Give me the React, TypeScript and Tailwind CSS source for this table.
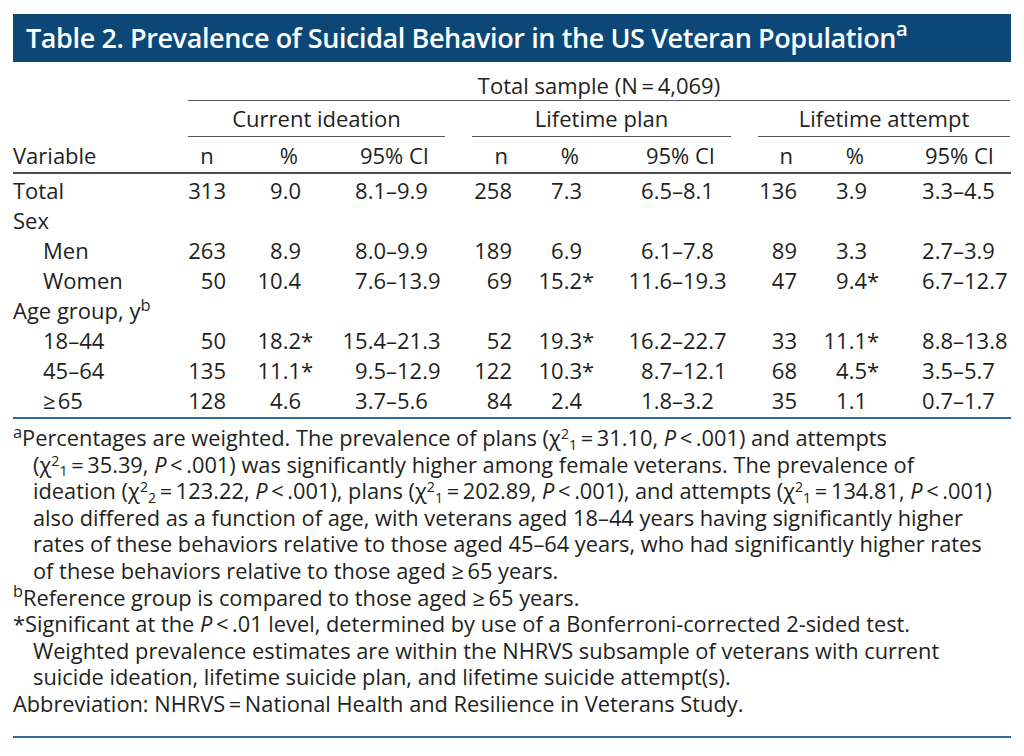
import React from 'react';

const cols =
  'grid grid-cols-[175px_38px_75px_85px_59px_67px_70px_90px_59px_66px_70px_86px_57px]';

type Group = { n: string; pct: string; star?: boolean; lo: string; hi: string };
type Row = { label: React.ReactNode; indent?: boolean; groups?: Group[] };

const T = '\u2009';

const rows: Row[] = [
  {
    label: 'Total',
    groups: [
      { n: '313', pct: '9.0', lo: '8.1', hi: '9.9' },
      { n: '258', pct: '7.3', lo: '6.5', hi: '8.1' },
      { n: '136', pct: '3.9', lo: '3.3', hi: '4.5' },
    ],
  },
  { label: 'Sex' },
  {
    label: 'Men',
    indent: true,
    groups: [
      { n: '263', pct: '8.9', lo: '8.0', hi: '9.9' },
      { n: '189', pct: '6.9', lo: '6.1', hi: '7.8' },
      { n: '89', pct: '3.3', lo: '2.7', hi: '3.9' },
    ],
  },
  {
    label: 'Women',
    indent: true,
    groups: [
      { n: '50', pct: '10.4', lo: '7.6', hi: '13.9' },
      { n: '69', pct: '15.2', star: true, lo: '11.6', hi: '19.3' },
      { n: '47', pct: '9.4', star: true, lo: '6.7', hi: '12.7' },
    ],
  },
  {
    label: (
      <>
        Age group, y<sup>b</sup>
      </>
    ),
  },
  {
    label: '18–44',
    indent: true,
    groups: [
      { n: '50', pct: '18.2', star: true, lo: '15.4', hi: '21.3' },
      { n: '52', pct: '19.3', star: true, lo: '16.2', hi: '22.7' },
      { n: '33', pct: '11.1', star: true, lo: '8.8', hi: '13.8' },
    ],
  },
  {
    label: '45–64',
    indent: true,
    groups: [
      { n: '135', pct: '11.1', star: true, lo: '9.5', hi: '12.9' },
      { n: '122', pct: '10.3', star: true, lo: '8.7', hi: '12.1' },
      { n: '68', pct: '4.5', star: true, lo: '3.5', hi: '5.7' },
    ],
  },
  {
    label: '≥\u200a65',
    indent: true,
    groups: [
      { n: '128', pct: '4.6', lo: '3.7', hi: '5.6' },
      { n: '84', pct: '2.4', lo: '1.8', hi: '3.2' },
      { n: '35', pct: '1.1', lo: '0.7', hi: '1.7' },
    ],
  },
];

// chi-square with df subscript, sup and sub kept small so lines don't collide
function Chi({ df }: { df: string }) {
  return (
    <>
      χ<sup className="text-[0.65em]">2</sup>
      <sub className="text-[0.65em]">{df}</sub>
    </>
  );
}

function P() {
  return <i>P</i>;
}

export default function App() {
  return (
    <div
      className="w-[1024px] h-[756px] bg-white pt-[14px] px-[13px] text-[#231f20]"
      style={{ fontFamily: '"Open Sans", "Noto Sans", sans-serif' }}
    >
      {/* title bar */}
      <div className="h-[48px] bg-[#0b4877] flex items-center pl-[13px] text-white text-[27px] font-semibold tracking-[-0.015em] whitespace-nowrap">
        Table 2. Prevalence of Suicidal Behavior in the US Veteran Population<sup>a</sup>
      </div>

      {/* column headers */}
      <div className={`${cols} text-[22px] leading-[30px]`}>
        <div />
        <div className="col-span-12 pt-[8px] text-center border-b-[1.5px] border-[#58595b]">
          Total sample (N{T}={T}4,069)
        </div>

        <div />
        <div className="col-span-4 pt-[2px] pb-[3px] text-center border-b-[1.5px] border-[#58595b]">
          Current ideation
        </div>
        <div className="col-span-4 ml-[27px] pt-[2px] pb-[3px] text-center border-b-[1.5px] border-[#58595b]">
          Lifetime plan
        </div>
        <div className="col-span-4 ml-[27px] pt-[2px] pb-[3px] text-center border-b-[1.5px] border-[#58595b]">
          Lifetime attempt
        </div>
      </div>

      <div className={`${cols} text-[22px] leading-[30px] pt-[3px] pb-[2px] border-b-2 border-[#4d4d4f]`}>
        <div>Variable</div>
        {[0, 1, 2].map((g) => (
          <React.Fragment key={g}>
            <div className={g === 0 ? 'text-center' : 'text-right pr-[4px]'}>n</div>
            <div className="text-right pr-[3px]">%</div>
            <div className="col-span-2 text-right pr-[16px]">95% CI</div>
          </React.Fragment>
        ))}
      </div>

      {/* body */}
      <div className="pt-[1px] pb-[2px] border-b-2 border-[#2d6a9c] text-[22px] leading-[30px]">
        {rows.map((r, i) => (
          <div key={i} className={cols}>
            <div className={`whitespace-nowrap ${r.indent ? 'pl-[30px]' : ''}`}>{r.label}</div>
            {r.groups &&
              r.groups.map((g, j) => (
                <React.Fragment key={j}>
                  <div className="text-right">{g.n}</div>
                  <div className="text-right">
                    <span className="relative">
                      {g.pct}
                      {g.star && <span className="absolute left-full top-0">*</span>}
                    </span>
                  </div>
                  <div className="text-right">{g.lo}</div>
                  <div className="whitespace-nowrap">–{g.hi}</div>
                </React.Fragment>
              ))}
          </div>
        ))}
      </div>

      {/* footnotes */}
      <div className="pt-[6px] pb-[18px] border-b-2 border-[#2d6a9c] text-[21.8px] leading-[26.6px] whitespace-nowrap">
        <div>
          <sup>a</sup>Percentages are weighted. The prevalence of plans (<Chi df="1" />{T}={T}31.10, <P />{T}&lt;{T}.001) and attempts
        </div>
        <div className="pl-[20px]">
          (<Chi df="1" />{T}={T}35.39, <P />{T}&lt;{T}.001) was significantly higher among female veterans. The prevalence of
        </div>
        <div className="pl-[20px]">
          ideation (<Chi df="2" />{T}={T}123.22, <P />{T}&lt;{T}.001), plans (<Chi df="1" />{T}={T}202.89, <P />{T}&lt;{T}.001), and attempts (<Chi df="1" />{T}={T}134.81, <P />{T}&lt;{T}.001)
        </div>
        <div className="pl-[20px]">
          also differed as a function of age, with veterans aged 18–44 years having significantly higher
        </div>
        <div className="pl-[20px]">
          rates of these behaviors relative to those aged 45–64 years, who had significantly higher rates
        </div>
        <div className="pl-[20px]">of these behaviors relative to those aged ≥{T}65 years.</div>
        <div>
          <sup>b</sup>Reference group is compared to those aged ≥{T}65 years.
        </div>
        <div>
          *Significant at the <P />{T}&lt;{T}.01 level, determined by use of a Bonferroni-corrected 2-sided test.
        </div>
        <div className="pl-[20px]">
          Weighted prevalence estimates are within the NHRVS subsample of veterans with current
        </div>
        <div className="pl-[20px]">
          suicide ideation, lifetime suicide plan, and lifetime suicide attempt(s).
        </div>
        <div>Abbreviation: NHRVS{T}={T}National Health and Resilience in Veterans Study.</div>
      </div>
    </div>
  );
}
